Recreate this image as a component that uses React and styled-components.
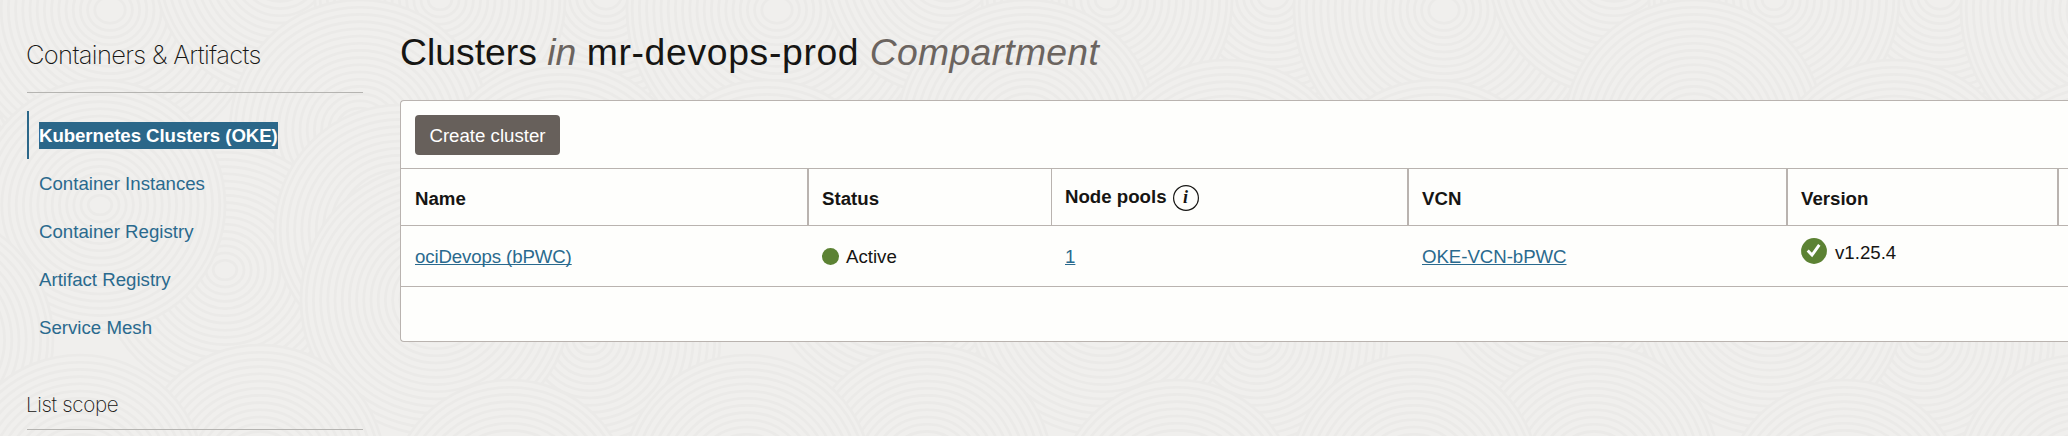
import React from "react";
import styled, { createGlobalStyle } from "styled-components";

const color = {
  page: "#f0efed",
  ripple: "#ebeae8",
  panel: "#fefefc",
  line: "#b9b3af",
  ink: "#161513",
  muted: "#6b645f",
  link: "#2a6a8e",
  accent: "#2b6789",
  button: "#67605b",
  ok: "#5c8233",
};

const GlobalStyle = createGlobalStyle`
  * { box-sizing: border-box; }
  body {
    margin: 0;
    overflow: hidden;
    background: ${color.page};
    color: ${color.ink};
    font-family: "Liberation Sans", Arial, sans-serif;
    font-size: 18.67px;
    line-height: 27px;
  }
`;

const Page = styled.div`
  position: relative;
  display: flex;
  gap: 37px;
  height: 436px;
  padding-left: 27px;
  overflow: hidden;
`;

const Texture = styled.svg`
  position: absolute;
  inset: 0;
  width: 100%;
  height: 100%;
  z-index: -1;
  filter: blur(0.6px);
`;

const Sidebar = styled.aside`
  flex: 0 0 336px;
`;

const SectionTitle = styled.h2`
  display: flex;
  align-items: flex-end;
  height: ${(p) => p.$height}px;
  margin: 0;
  padding-bottom: ${(p) => p.$gap}px;
  border-bottom: 1px solid #b5b4b1;
  font-family: Inter, "Liberation Sans", sans-serif;
  font-size: ${(p) => p.$size}px;
  font-weight: 200;
  line-height: 32px;
  letter-spacing: ${(p) => p.$tracking}px;
  text-indent: -1px;
  white-space: nowrap;
`;

const Nav = styled.nav`
  display: flex;
  flex-direction: column;
  padding-top: 18px;
`;

const NavItem = styled.a`
  display: flex;
  align-items: center;
  height: 48px;
  padding: 1px 0 0 10px;
  border-left: 2px solid ${(p) => (p.$selected ? color.accent : "transparent")};
  color: ${color.link};
  font-weight: ${(p) => (p.$selected ? 700 : 400)};
`;

const Highlight = styled.span`
  height: 27px;
  background: ${color.accent};
  color: #fff;
  letter-spacing: -0.07px;
`;

const Main = styled.main`
  flex: 1;
  min-width: 0;
`;

const Title = styled.h1`
  height: 100px;
  margin: 0;
  padding-top: 30px;
  font-size: 37.33px;
  font-weight: 400;
  line-height: 44px;
  white-space: nowrap;

  em { color: ${color.muted}; }
`;

const Tracked = styled.span`
  letter-spacing: ${(p) => p.$by}px;
`;

const Panel = styled.section`
  height: 242px;
  border: 1px solid ${color.line};
  border-right: 0;
  border-radius: 4px 0 0 4px;
  background: ${color.panel};
`;

const Toolbar = styled.div`
  padding: 14px;
  height: 68px;
  border-bottom: 1px solid ${color.line};
`;

const Button = styled.button`
  display: block;
  width: 145px;
  height: 40px;
  padding: 0;
  border: 0;
  border-radius: 4px;
  background: ${color.button};
  color: #fff;
  font: inherit;
`;

const Row = styled.div`
  display: grid;
  grid-template-columns: 408px 243px 357px 379px 271px 1fr;
  height: ${(p) => p.$height}px;
  border-bottom: 1px solid ${color.line};
`;

const HeadCell = styled.div`
  display: flex;
  gap: 6px;
  padding: ${(p) => p.$top ?? 16}px 0 0 ${(p) => p.$left ?? 13}px;
  border-right: ${(p) => p.$rule ?? 2}px solid ${color.line};
  font-weight: 700;
`;

const Cell = styled.div`
  display: flex;
  gap: ${(p) => p.$gap ?? 0}px;
  padding: ${(p) => p.$top ?? 17}px 0 0 ${(p) => p.$left ?? 13}px;
`;

const Link = styled.a`
  color: ${color.link};
  letter-spacing: ${(p) => p.$tracking ?? 0}px;
  text-decoration: underline;
  text-decoration-thickness: 1px;
  text-underline-offset: 1px;
  text-decoration-skip-ink: none;
`;

const Dot = styled.span`
  width: 17px;
  height: 17px;
  margin-top: 5px;
  border-radius: 50%;
  background: ${color.ok};
`;

const CheckBadge = styled.svg`
  width: 26px;
  height: 26px;
  margin-top: -1px;
`;

const InfoBadge = styled.span`
  width: 26px;
  height: 26px;
  margin-top: 2px;
  border-radius: 50%;
  box-shadow: inset 0 0 0 1.2px ${color.ink};
  font: italic 700 18px/25px "Liberation Serif", serif;
  text-align: center;
`;

/* [centre x, centre y, radius]; later discs overlap earlier ones */
const DISCS = [
  [606, -4, 150], [110, 10, 150], [280, -30, 125], [440, 0, 125],
  [360, 130, 130], [560, 190, 130], [225, 270, 125], [100, 205, 125],
  [400, 230, 125], [590, 340, 130], [436, 300, 135], [510, 500, 120],
  [260, 470, 125], [80, 480, 125],
];
const STEP = 7.2;

function Ripples() {
  return (
    <Texture aria-hidden="true">
      <defs>
        <pattern id="ripples" width="667" height="560" patternUnits="userSpaceOnUse">
          {DISCS.map(([cx, cy, r]) =>
            [-667, 0, 667].map((dx) => (
              <g key={`${cx}-${cy}-${dx}`} fill="none" stroke={color.ripple} strokeWidth="2.6">
                <circle cx={cx + dx} cy={cy} r={r} fill={color.page} />
                {Array.from({ length: Math.floor(r / STEP) - 1 }, (_, i) => (
                  <ellipse
                    key={i}
                    cx={cx + dx}
                    cy={cy}
                    rx={r - STEP * (i + 1) + 2}
                    ry={r - STEP * (i + 1)}
                  />
                ))}
              </g>
            ))
          )}
        </pattern>
      </defs>
      <rect width="100%" height="100%" fill="url(#ripples)" />
    </Texture>
  );
}

const NAV = [
  "Kubernetes Clusters (OKE)",
  "Container Instances",
  "Container Registry",
  "Artifact Registry",
  "Service Mesh",
];

export default function App() {
  return (
    <Page>
      <GlobalStyle />
      <Ripples />
      <Sidebar>
        <SectionTitle $height={93} $gap={21} $size={25.5} $tracking={-0.66}>
          Containers &amp; Artifacts
        </SectionTitle>
        <Nav>
          {NAV.map((label, i) => (
            <NavItem key={label} $selected={i === 0}>
              {i === 0 ? <Highlight>{label}</Highlight> : label}
            </NavItem>
          ))}
        </Nav>
        <SectionTitle $height={79} $gap={8} $size={20.6} $tracking={-0.35}>
          List scope
        </SectionTitle>
      </Sidebar>
      <Main>
        <Title>
          Clusters <em>in</em> <Tracked $by={0.65}>mr-devops-prod</Tracked>{" "}
          <Tracked as="em" $by={0.3}>Compartment</Tracked>
        </Title>
        <Panel>
          <Toolbar>
            <Button>Create cluster</Button>
          </Toolbar>
          <Row $height={57}>
            <HeadCell $left={14}>Name</HeadCell>
            <HeadCell $rule={1}>Status</HeadCell>
            <HeadCell $top={14}>
              Node pools <InfoBadge>i</InfoBadge>
            </HeadCell>
            <HeadCell>VCN</HeadCell>
            <HeadCell>Version</HeadCell>
          </Row>
          <Row $height={61}>
            <Cell $left={14}>
              <Link $tracking={-0.12}>ociDevops (bPWC)</Link>
            </Cell>
            <Cell $gap={7}>
              <Dot />
              Active
            </Cell>
            <Cell>
              <Link>1</Link>
            </Cell>
            <Cell>
              <Link $tracking={-0.05}>OKE-VCN-bPWC</Link>
            </Cell>
            <Cell $gap={8} $top={13}>
              <CheckBadge viewBox="0 0 26 26">
                <circle cx="13" cy="13" r="12.9" fill={color.ok} />
                <path d="M6.7 12.6l4.3 4.5 7.3-10.3" fill="none" stroke="#fff" strokeWidth="2.9" />
              </CheckBadge>
              v1.25.4
            </Cell>
          </Row>
        </Panel>
      </Main>
    </Page>
  );
}
